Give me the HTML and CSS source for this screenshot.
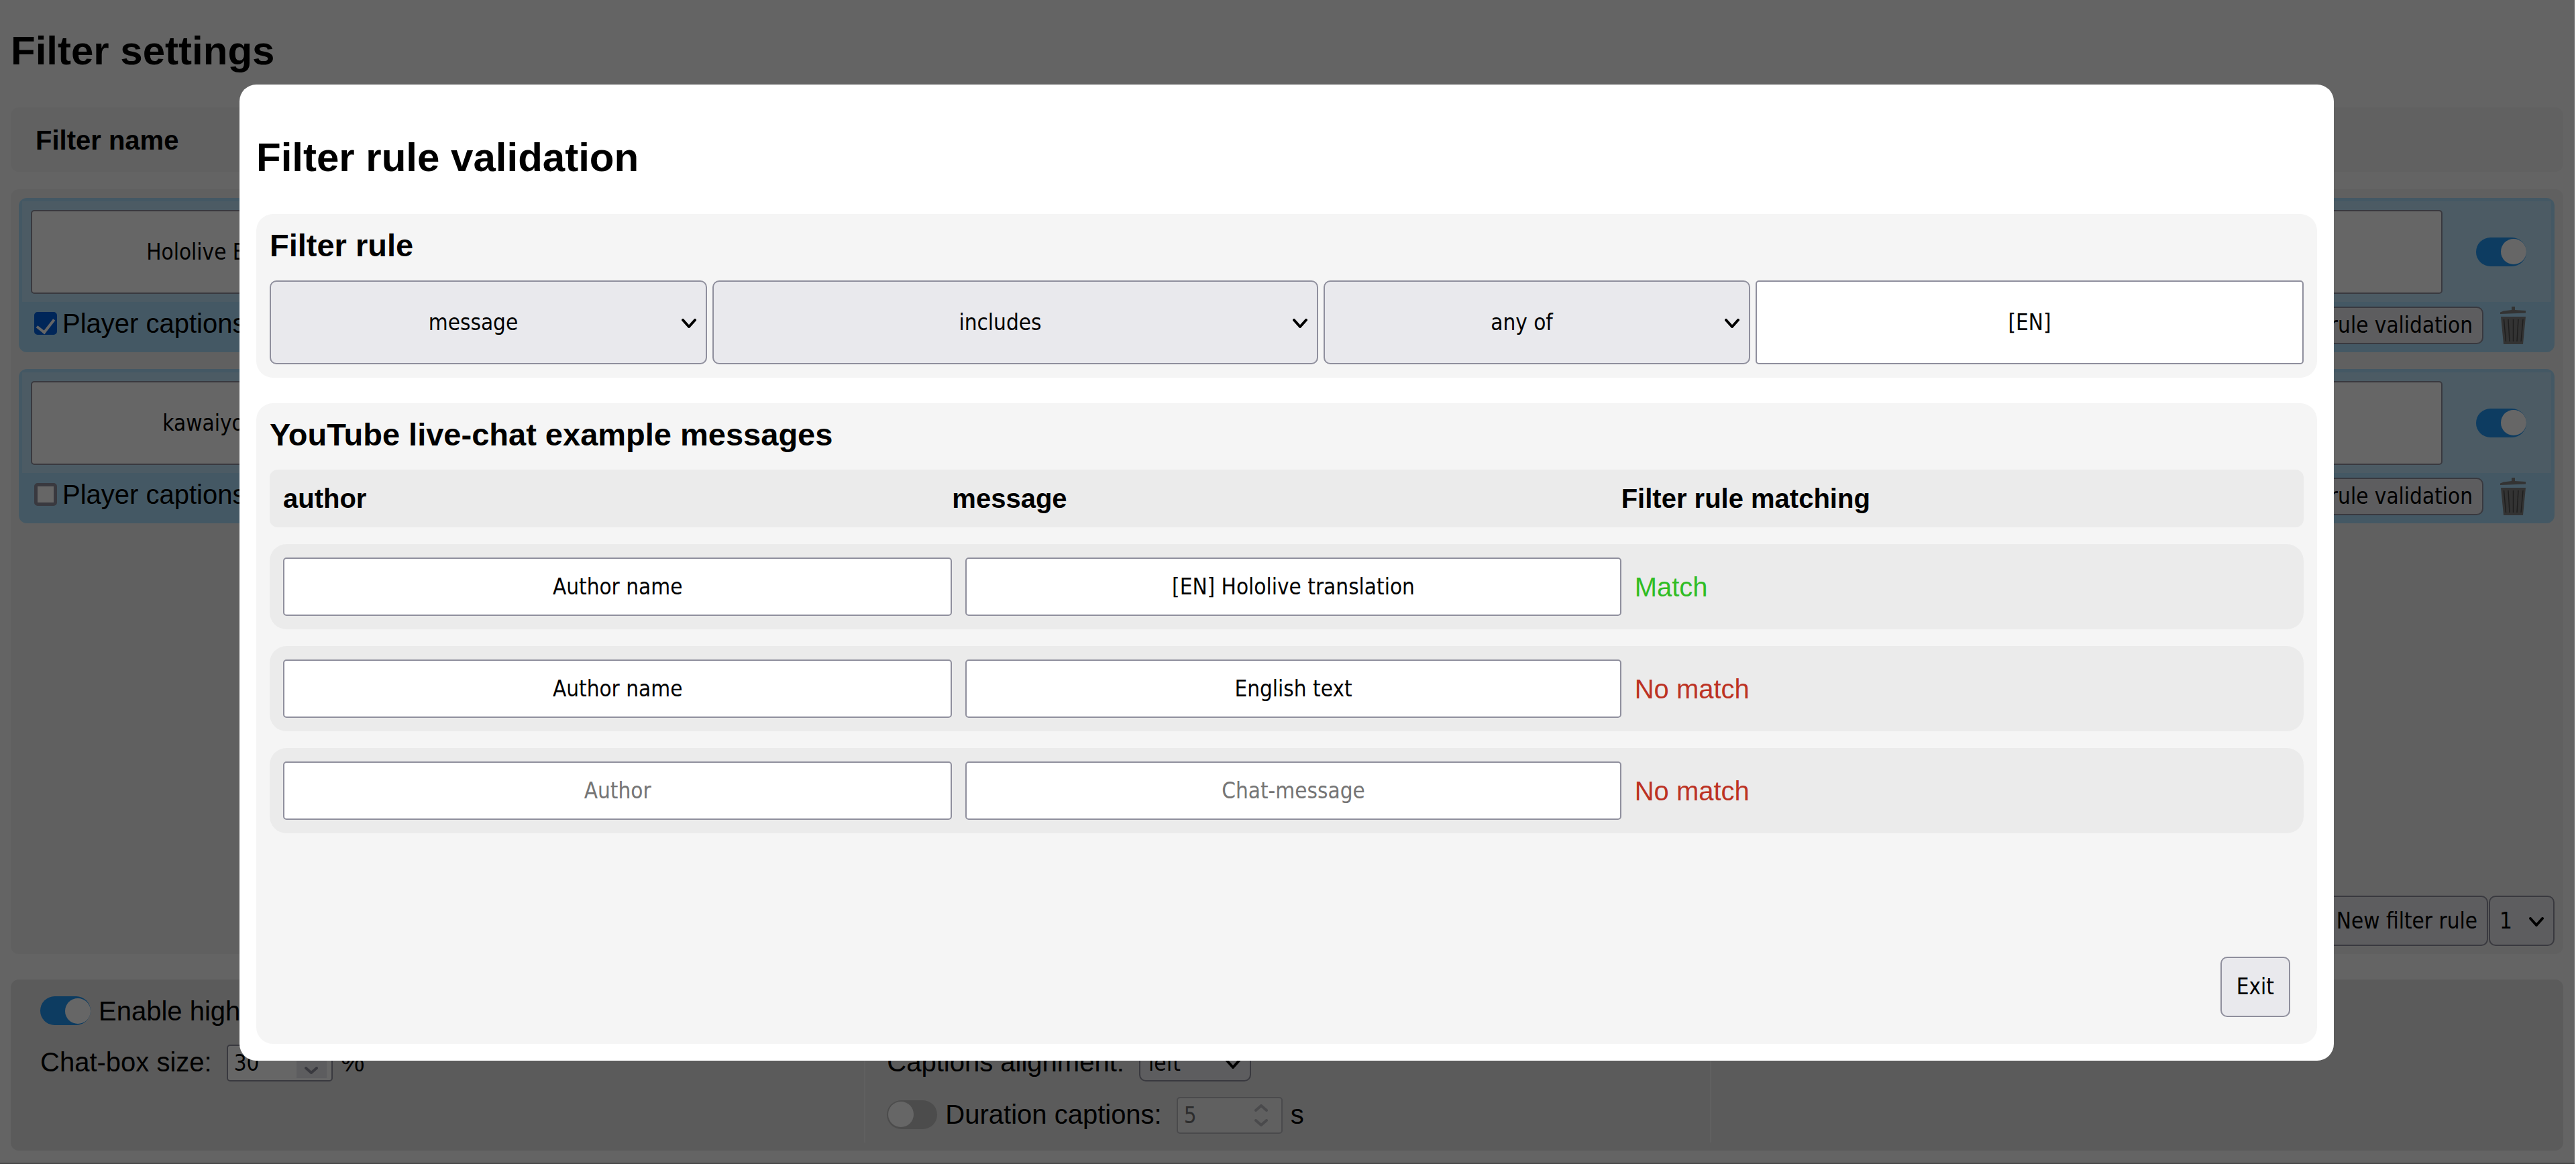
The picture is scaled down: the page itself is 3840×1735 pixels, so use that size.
FILE: index.html
```html
<!DOCTYPE html>
<html lang="en">
<head>
<meta charset="utf-8">
<title>Filter settings</title>
<link rel="stylesheet" href="styles.css">
</head>
<body>
<svg class="sprite" aria-hidden="true">
  <symbol id="trash" viewBox="0 0 39 56">
    <path fill="#808080" d="M17 0h5v5l16 1v3.500L0 11V8.500l5-2 12-1.500z"/>
    <path fill="#808080" d="M1 15h37l-4 41H5z"/>
    <path stroke="#4d4d4d" stroke-width="1.500" fill="none" d="M5.500 19l3 33M12 19l2 33M19.500 19v33M27 19l-2 33M34 19l-3 33"/>
  </symbol>
</svg>
<main class="page">
  <h1 class="title">Filter settings</h1>
  <div class="list-head">Filter name</div>
  <section class="list">
    <article class="filter">
      <div class="filter-top">
        <input class="field" type="text" value="Hololive EN" aria-label="Filter name">
        <input class="field" type="text" aria-label="Filter value">
        <input class="toggle" type="checkbox" checked aria-label="Filter enabled">
      </div>
      <div class="filter-bottom">
        <label class="tick-label"><input class="tick" type="checkbox" checked>Player captions</label>
        <button class="button" type="button">Filter rule validation</button>
        <button class="icon-button" type="button" aria-label="Delete filter"><svg class="trash"><use href="#trash"/></svg></button>
      </div>
    </article>
    <article class="filter">
      <div class="filter-top">
        <input class="field" type="text" value="kawaiyo" aria-label="Filter name">
        <input class="field" type="text" aria-label="Filter value">
        <input class="toggle" type="checkbox" checked aria-label="Filter enabled">
      </div>
      <div class="filter-bottom">
        <label class="tick-label"><input class="tick" type="checkbox">Player captions</label>
        <button class="button" type="button">Filter rule validation</button>
        <button class="icon-button" type="button" aria-label="Delete filter"><svg class="trash"><use href="#trash"/></svg></button>
      </div>
    </article>
    <div class="list-actions">
      <button class="button tall" type="button">New filter rule</button>
      <span class="select-wrap"><select class="select small" aria-label="Number of rules"><option>1</option></select><svg class="chevron" viewBox="0 0 22 14"><path d="M2 2l9 10 9-10"/></svg></span>
    </div>
  </section>
  <section class="options">
    <div class="option-column">
      <label class="option"><input class="toggle" type="checkbox" checked>Enable high</label>
      <div class="option"><label class="option-label" for="size">Chat-box size:</label>
        <span class="number"><input class="number-input" id="size" type="text" inputmode="numeric" value="30"><span class="spinner filled"><svg viewBox="0 0 20 11"><path d="M2 9l8-7 8 7"/></svg><svg viewBox="0 0 20 11"><path d="M2 2l8 7 8-7"/></svg></span></span><span class="option-label">%</span></div>
    </div>
    <div class="option-column">
      <div class="option"></div>
      <div class="option"><label class="option-label" for="align">Captions alignment:</label>
        <span class="select-wrap"><select class="select align" id="align"><option>left</option></select><svg class="chevron" viewBox="0 0 22 14"><path d="M2 2l9 10 9-10"/></svg></span></div>
      <div class="option"><label class="option-label"><input class="toggle" type="checkbox">Duration captions:</label>
        <span class="number disabled"><input class="number-input" type="text" inputmode="numeric" value="5" disabled aria-label="Duration in seconds"><span class="spinner"><svg viewBox="0 0 20 11"><path d="M2 9l8-7 8 7"/></svg><svg viewBox="0 0 20 11"><path d="M2 2l8 7 8-7"/></svg></span></span><span class="option-label">s</span></div>
    </div>
    <div class="option-column"></div>
  </section>
</main>
<div class="overlay">
  <div class="modal" role="dialog" aria-modal="true" aria-labelledby="modal-title">
    <h1 class="modal-title" id="modal-title">Filter rule validation</h1>
    <section class="card">
      <h2 class="card-title">Filter rule</h2>
      <div class="rule">
        <span class="select-wrap"><select class="select wide" aria-label="Message part"><option>message</option></select><svg class="chevron" viewBox="0 0 22 14"><path d="M2 2l9 10 9-10"/></svg></span>
        <span class="select-wrap"><select class="select wide" aria-label="Comparison"><option>includes</option></select><svg class="chevron" viewBox="0 0 22 14"><path d="M2 2l9 10 9-10"/></svg></span>
        <span class="select-wrap"><select class="select wide" aria-label="Quantity"><option>any of</option></select><svg class="chevron" viewBox="0 0 22 14"><path d="M2 2l9 10 9-10"/></svg></span>
        <input class="field" type="text" value="[EN]" aria-label="Value">
      </div>
    </section>
    <section class="card examples">
      <h2 class="card-title">YouTube live-chat example messages</h2>
      <div class="columns">
        <span>author</span><span>message</span><span>Filter rule matching</span>
      </div>
      <div class="example">
        <input class="field" type="text" value="Author name" placeholder="Author" aria-label="Author">
        <input class="field" type="text" value="[EN] Hololive translation" placeholder="Chat-message" aria-label="Message">
        <output class="match">Match</output>
      </div>
      <div class="example">
        <input class="field" type="text" value="Author name" placeholder="Author" aria-label="Author">
        <input class="field" type="text" value="English text" placeholder="Chat-message" aria-label="Message">
        <output class="no-match">No match</output>
      </div>
      <div class="example">
        <input class="field" type="text" placeholder="Author" aria-label="Author">
        <input class="field" type="text" placeholder="Chat-message" aria-label="Message">
        <output class="no-match">No match</output>
      </div>
      <button class="button exit" type="button">Exit</button>
    </section>
  </div>
</div>
</body>
</html>
```
FILE: styles.css
```css
* {
  box-sizing: border-box;
}

html {
  background: #fff;
}

body {
  margin: 0 2px 0 0;
  min-height: 100vh;
  background: #fafafa;
  color: #000;
  font: 40px/46px "Liberation Sans", Arial, sans-serif;
  border-bottom: 2px solid #b4b4b4;
}

h1,
h2 {
  margin: 0;
  font-weight: bold;
}

.sprite {
  position: absolute;
  width: 0;
  height: 0;
}

/* Controls */

input,
select,
button {
  margin: 0;
  color: #000;
  font: 33px/40px "DejaVu Sans Condensed", Tahoma, sans-serif;
}

.field {
  min-width: 0;
  width: 100%;
  padding: 0 8px;
  border: 2px solid #8f8f9d;
  border-radius: 5px;
  background: #fff;
  text-align: center;
}

.field::placeholder {
  color: #757575;
  opacity: 1;
}

.button {
  height: 56px;
  padding: 0 14px;
  border: 2px solid #8f8f9d;
  border-radius: 10px;
  background: #e9e9ed;
  white-space: nowrap;
}

.button.tall {
  height: 75px;
}

.icon-button {
  display: flex;
  padding: 0;
  border: 0;
  background: none;
}

.trash {
  width: 39px;
  height: 56px;
}

.select-wrap {
  position: relative;
  display: flex;
  min-width: 0;
}

.select {
  appearance: none;
  width: 100%;
  border: 2px solid #8f8f9d;
  border-radius: 10px;
  background: #e9e9ed;
}

.select.wide {
  padding: 0 45px 0 0;
  text-align: center;
  text-align-last: center;
}

.select.small {
  width: 98px;
  height: 75px;
  padding: 0 14px;
}

.select.align {
  width: 167px;
  height: 55px;
  padding: 0 12px;
}

.chevron {
  position: absolute;
  top: calc(50% - 6px);
  right: 16px;
  width: 22px;
  height: 14px;
  fill: none;
  stroke: #000;
  stroke-width: 4;
  stroke-linecap: round;
  stroke-linejoin: round;
  pointer-events: none;
}

.toggle {
  appearance: none;
  display: flex;
  align-items: center;
  flex: none;
  width: 75px;
  height: 43px;
  padding-left: 2px;
  border-radius: 22px;
  background: #bdbdbd;
}

.toggle::before {
  content: "";
  width: 38px;
  height: 38px;
  border-radius: 50%;
  background: #fff;
}

.toggle:checked {
  justify-content: flex-end;
  padding: 0;
  background: #2196f3;
}

.tick {
  appearance: none;
  display: grid;
  place-items: center;
  width: 34px;
  height: 34px;
  border: 5px solid #8f8f9d;
  border-radius: 5px;
  background: #fff;
}

.tick:checked {
  border-color: #0060df;
  background: #0060df;
}

.tick:checked::before {
  content: "";
  width: 12px;
  height: 22px;
  margin-bottom: 5px;
  border: solid #fff;
  border-width: 0 4px 4px 0;
  transform: rotate(38deg);
}

.number {
  display: flex;
  width: 158px;
  height: 55px;
  padding: 3px 7px 3px 9px;
  border: 2px solid #8f8f9d;
  border-radius: 5px;
  background: #fff;
}

.number-input {
  min-width: 0;
  flex: 1;
  padding: 0;
  border: 0;
  background: none;
}

.spinner {
  display: flex;
  flex-direction: column;
  justify-content: space-around;
  align-items: center;
  width: 45px;
}

.spinner.filled {
  background: #e9e9ed;
}

.spinner svg {
  width: 20px;
  height: 11px;
  fill: none;
  stroke: #8f8f9d;
  stroke-width: 4;
  stroke-linecap: round;
  stroke-linejoin: round;
}

.number.disabled {
  border-color: #b8b8be;
  background: #efefef;
}

.disabled .number-input {
  color: #707070;
}

.disabled .spinner svg {
  stroke: #b8b8be;
}

/* Settings page */

.page {
  display: flex;
  flex-direction: column;
  padding: 42px 17px 17px 16px;
}

.title,
.modal-title {
  font-size: 60px;
  line-height: 68px;
}

.list-head {
  margin-top: 50px;
  padding: 26px 37px 24px;
  border-radius: 12px;
  background: #f2f2f2;
  font-weight: bold;
}

.list {
  display: flex;
  flex-direction: column;
  gap: 25px;
  min-height: 1140px;
  margin-top: 26px;
  padding: 13px 13px 12px 12px;
  border-radius: 12px;
  background: #f0f0f0;
}

.filter {
  padding: 5px;
  border-radius: 12px;
  background: #aaddfa;
}

.filter-top {
  display: grid;
  grid-template-columns: 514px 1fr 75px;
  align-items: center;
  column-gap: 50px;
  height: 150px;
  padding: 0 37px 0 13px;
  background: #bee4f9;
}

.filter-top .field {
  height: 125px;
}

.filter-bottom {
  display: flex;
  align-items: center;
  gap: 25px;
  height: 70px;
  padding: 0 37px 0 18px;
}

.tick-label {
  display: flex;
  align-items: center;
  gap: 8px;
  margin-right: auto;
  padding-bottom: 6px;
}

.list-actions {
  display: flex;
  justify-content: flex-end;
  gap: 1px;
  margin-top: auto;
}

.options {
  display: grid;
  grid-template-columns: 1fr 1fr 1fr;
  margin-top: 38px;
  padding: 12px;
  border-radius: 12px;
  background: #e3e3e3;
}

.option-column {
  display: flex;
  flex-direction: column;
  gap: 23px;
  padding: 7px 32px 13px;
}

.option-column + .option-column {
  border-left: 2px solid #f0f0f0;
}

.option,
.option-label {
  display: flex;
  align-items: center;
  gap: 12px;
  height: 55px;
}

.option-label {
  padding-bottom: 3px;
}

label.option-label {
  margin-right: 10px;
}

/* Dialog */

.overlay {
  position: fixed;
  inset: 0 2px 0 0;
  padding: 126px 359px 0 357px;
  background: rgba(0, 0, 0, 0.6);
}

.modal {
  padding: 75px 25px 25px;
  border-radius: 25px;
  background: #fff;
}

.card {
  display: flex;
  flex-direction: column;
  margin-top: 50px;
  padding: 20px;
  border-radius: 25px;
  background: #f5f5f5;
}

.card-title {
  font-size: 47px;
  line-height: 54px;
}

.rule {
  display: grid;
  grid-template-columns: 652fr 903fr 636fr 817fr;
  gap: 8px;
  height: 125px;
  margin-top: 25px;
}

.examples {
  gap: 25px;
  margin-top: 38px;
}

.columns,
.example {
  display: grid;
  grid-template-columns: 1fr 1fr 1fr;
  padding: 20px;
  background: #ebebeb;
}

.columns {
  border-radius: 12px;
  font-weight: bold;
}

.example {
  align-items: center;
  border-radius: 25px;
}

.example .field {
  height: 87px;
}

.example .field + .field {
  width: auto;
  margin-left: 20px;
}

.example output {
  margin-left: 20px;
}

.match {
  color: #30bd24;
}

.no-match {
  color: #bc3223;
}

.exit {
  align-self: flex-end;
  height: 90px;
  margin: 159px 20px 20px;
  padding: 0 22px;
}
```
